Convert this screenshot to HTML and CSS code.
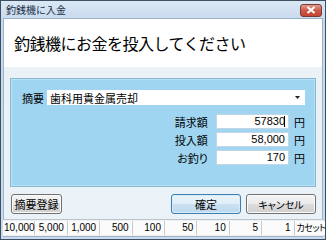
FILE: index.html
```html
<!DOCTYPE html>
<html lang="ja">
<head>
    <meta charset="UTF-8">
    <title>釣銭機に入金</title>
    <link rel="stylesheet" href="styles.css">
</head>
<body>
    <div class="window">
        <div class="titlebar">
            <span class="title">釣銭機に入金</span>
            <span class="close">
                <svg width="10" height="8" viewBox="0 0 10 8"><path d="M1.5 1 L8.5 7 M8.5 1 L1.5 7" stroke="#fff" stroke-width="2"/></svg>
            </span>
        </div>
        <div class="client">
            <div class="header">釣銭機にお金を投入してください</div>
            <div class="content">
                <div class="panel">
                    <div class="summary">
                        <span class="label">摘要</span>
                        <div class="select">
                            <span>歯科用貴金属売却</span>
                            <svg width="5" height="3" viewBox="0 0 5 3"><path d="M0 0 H5 L2.5 3 Z" fill="#222"/></svg>
                        </div>
                    </div>
                    <div class="amounts">
                        <div class="row">
                            <span class="name">請求額</span>
                            <div class="box">57830<i class="caret"></i></div>
                            <span class="yen">円</span>
                        </div>
                        <div class="row">
                            <span class="name">投入額</span>
                            <div class="box">58,000</div>
                            <span class="yen">円</span>
                        </div>
                        <div class="row">
                            <span class="name">お釣り</span>
                            <div class="box">170</div>
                            <span class="yen">円</span>
                        </div>
                    </div>
                </div>
                <div class="buttons">
                    <button class="btn reg">摘要登録</button>
                    <span class="spacer"></span>
                    <button class="btn ok">確定</button>
                    <button class="btn cancel">キャンセル</button>
                </div>
            </div>
            <div class="statusbar">
                <span class="cell first">10,000</span>
                <span class="cell">5,000</span>
                <span class="cell">1,000</span>
                <span class="cell">500</span>
                <span class="cell">100</span>
                <span class="cell">50</span>
                <span class="cell">10</span>
                <span class="cell">5</span>
                <span class="cell">1</span>
                <span class="cell last">カセット</span>
            </div>
        </div>
    </div>
</body>
</html>
```

FILE: styles.css
```css
*{
    margin: 0;
    padding: 0;
    box-sizing: border-box;
}

body{
    font-family: "Noto Sans CJK JP", "Liberation Sans", sans-serif;
    color: #000;
    background: #fff;
}

.window{
    width: 326px;
    height: 240px;
    border: 1px solid #3e4f62;
    background: linear-gradient(#dbe7f4, #c6d9ee 20px, #c8dbef);
    display: flex;
    flex-direction: column;
}

.titlebar{
    height: 17px;
    display: flex;
    align-items: center;
    padding: 0 3px 0 5px;
}
.title{
    font-size: 10px;
    color: #1c2f46;
    flex: 1;
}
.close{
    width: 22px;
    height: 13px;
    margin-top: 1px;
    border: 1px solid #7a3a36;
    border-radius: 3px;
    background: linear-gradient(#e49c8f, #cc5a4a 50%, #c3432f);
    display: flex;
    align-items: center;
    justify-content: center;
}

.client{
    flex: 1;
    margin: 0 2px 2px;
    border: 1px solid #9fb3c8;
    background: #eaf2f8;
    display: flex;
    flex-direction: column;
}

.header{
    height: 48px;
    background: #fff;
    font-size: 16px;
    line-height: 48px;
    padding-left: 10px;
    letter-spacing: -0.5px;
}

.content{
    flex: 1;
    padding: 11px 6px 0 6px;
}

.panel{
    height: 109px;
    background: #9fd5f0;
    border: 1px solid #86b8d4;
    box-shadow: inset 0 0 0 1px #b9e2f5;
    padding: 11px 10px 0 11px;
}

.summary{
    display: flex;
    align-items: center;
    height: 15px;
}
.label{
    font-size: 11px;
    width: 25px;
}
.select{
    flex: 1;
    height: 15px;
    background: #fff;
    display: flex;
    align-items: center;
    justify-content: space-between;
    padding: 0 5px 0 3px;
    font-size: 11px;
}

.amounts{
    margin-top: 9px;
    display: flex;
    flex-direction: column;
    gap: 3px;
}
.row{
    display: flex;
    align-items: center;
    height: 15px;
}
.name{
    font-size: 11px;
    width: 196px;
    text-align: right;
    padding-right: 8px;
    font-feature-settings: "palt";
}
.box{
    width: 74px;
    height: 15px;
    background: #fff;
    border: 1px solid #c4d6e3;
    font-family: "Liberation Sans", sans-serif;
    font-size: 11px;
    line-height: 13px;
    text-align: right;
    padding-right: 3px;
}
.caret{
    display: inline-block;
    width: 1px;
    height: 11px;
    background: #000;
    vertical-align: -2px;
    margin-left: -1px;
}
.yen{
    font-size: 11px;
    margin-left: 5px;
}

.buttons{
    display: flex;
    align-items: center;
    margin-top: 7px;
    padding-left: 1px;
}
.spacer{
    flex: 1;
}
.btn{
    height: 20px;
    font-family: "Noto Sans CJK JP", sans-serif;
    font-size: 11px;
    border: 1px solid #707070;
    border-radius: 3px;
    background: linear-gradient(#f3f3f3, #ebebeb 50%, #dddddd 51%, #cfcfcf);
    box-shadow: inset 0 0 0 1px #fbfbfb;
    color: #000;
}
.reg{
    width: 51px;
}
.ok{
    width: 70px;
    margin-right: 5px;
    border-color: #3c7fb1;
    background: linear-gradient(#eaf4fa, #e0eef8 50%, #cbe2f2 51%, #bcd8ec);
    box-shadow: inset 0 0 0 1px #d7ecf9;
}
.cancel{
    width: 70px;
    font-size: 10px;
    font-feature-settings: "palt";
}

.statusbar{
    height: 17px;
    margin: 0 -1px;
    background: #f0f0f0;
    border-top: 1px solid #b8c4cf;
    display: flex;
    align-items: center;
    padding: 1px 0;
}
.cell{
    flex: none;
    width: 32.4px;
    height: 14px;
    font-family: "Liberation Sans", sans-serif;
    font-size: 10px;
    line-height: 14px;
    text-align: right;
    padding-right: 3px;
    border-right: 1px solid #c9c9c9;
    background: #fbfbfb;
    white-space: nowrap;
}
.first{
    text-align: left;
    padding-left: 1px;
    padding-right: 0;
}
.last{
    flex: 1;
    width: auto;
    border-right: none;
    text-align: left;
    padding: 0 0 0 2px;
    font-family: "Noto Sans CJK JP", sans-serif;
    font-size: 9px;
    letter-spacing: -0.5px;
    font-feature-settings: "palt";
}
```
